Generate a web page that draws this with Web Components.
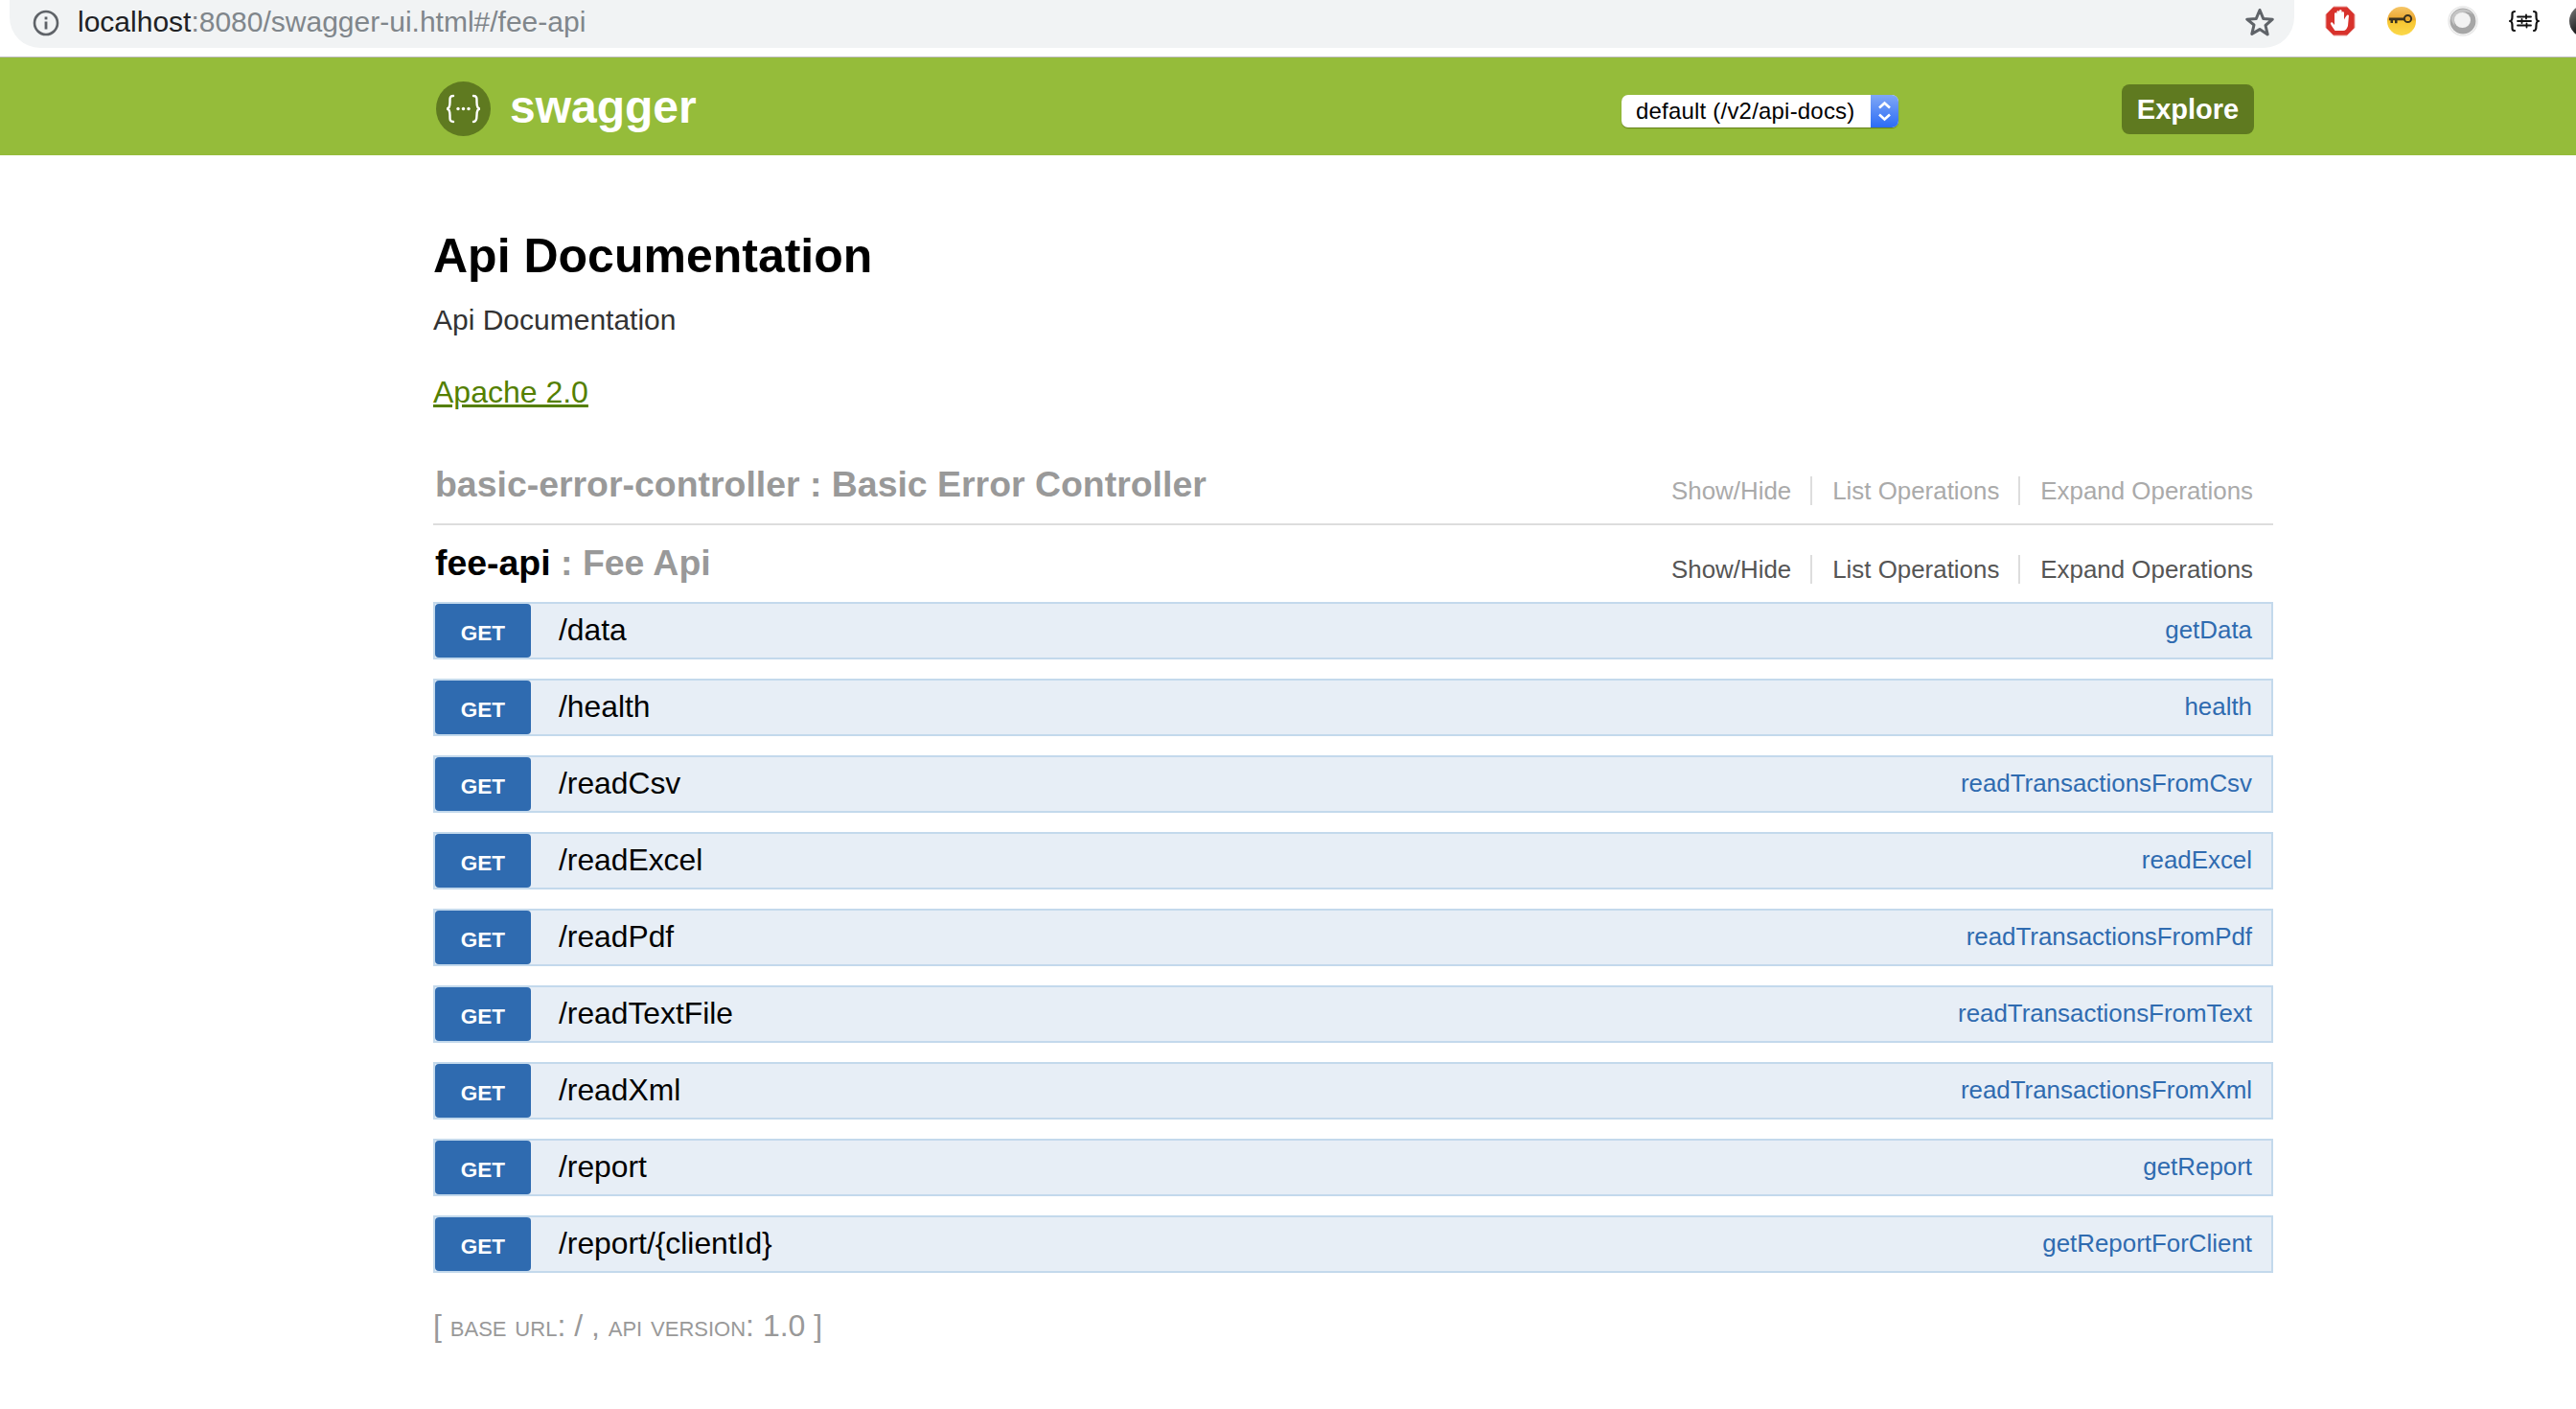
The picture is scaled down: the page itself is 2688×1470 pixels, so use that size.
<!DOCTYPE html>
<html lang="en"><head><meta charset="utf-8"><title>Swagger UI</title>
<style>
html,body{margin:0;padding:0;background:#fff;font-family:"Liberation Sans",Arial,sans-serif;overflow:hidden;height:1470px}
</style></head>
<body>
<browser-bar url-host="localhost" url-rest=":8080/swagger-ui.html#/fee-api"></browser-bar>
<swagger-header></swagger-header>
<api-page>
  <api-info title="Api Documentation" desc="Api Documentation" license="Apache 2.0"></api-info>
  <api-section name="basic-error-controller" desc="Basic Error Controller" muted divider></api-section>
  <api-section name="fee-api" desc="Fee Api">
    <op-row path="/data" nick="getData"></op-row>
    <op-row path="/health" nick="health"></op-row>
    <op-row path="/readCsv" nick="readTransactionsFromCsv"></op-row>
    <op-row path="/readExcel" nick="readExcel"></op-row>
    <op-row path="/readPdf" nick="readTransactionsFromPdf"></op-row>
    <op-row path="/readTextFile" nick="readTransactionsFromText"></op-row>
    <op-row path="/readXml" nick="readTransactionsFromXml"></op-row>
    <op-row path="/report" nick="getReport"></op-row>
    <op-row path="/report/{clientId}" nick="getReportForClient"></op-row>
  </api-section>
  <api-footer></api-footer>
</api-page>
<script>
function def(name, render){
  customElements.define(name, class extends HTMLElement{
    constructor(){super();this.attachShadow({mode:'open'});}
    connectedCallback(){this.shadowRoot.innerHTML=render(this);}
  });
}
def('browser-bar', el=>`<style>
:host{display:flex;height:59px;border-bottom:1px solid #b9b9b9;box-sizing:content-box;overflow:hidden;background:#fff;font-family:"Liberation Sans",Arial,sans-serif}
.url{flex:none;margin-left:10px;width:2384px;height:50px;background:#f1f3f4;border-radius:0 0 32px 32px;display:flex;align-items:center;box-sizing:border-box;padding:0 0 2px 24px}
.url .info{flex:none;width:28px;height:28px;margin-right:19px}
.txt{font-size:30px;line-height:44px;color:#80868b;white-space:nowrap;margin-top:-2px}
.txt b{font-weight:400;color:#202124}
.star{margin-left:auto;margin-right:20px;width:32px;height:32px;flex:none;margin-top:-2px}
.ext{display:flex;flex:none;height:44px;align-items:center;padding-left:30px;gap:28px}
.ext svg{flex:none;width:36px;height:36px}
</style>
<div class="url">
<svg class="info" viewBox="0 0 28 28"><circle cx="14" cy="14" r="12" fill="none" stroke="#5f6368" stroke-width="2.6"/><rect x="12.6" y="12.5" width="2.8" height="8" fill="#5f6368"/><rect x="12.6" y="7.5" width="2.8" height="2.9" fill="#5f6368"/></svg>
<span class="txt"><b>${el.getAttribute('url-host')}</b>${el.getAttribute('url-rest')}</span>
<svg class="star" viewBox="0 0 32 32"><path d="M16 3.5l3.7 8.9 9.6.8-7.3 6.3 2.2 9.4L16 23.6l-8.2 4.8L10 19 2.700 13.2l9.6-.8z" fill="none" stroke="#5f6368" stroke-width="3" stroke-linejoin="round"/></svg>
</div>
<div class="ext">
<svg viewBox="0 0 36 36"><path d="M11 3h14l8 8v14l-8 8H11l-8-8V11z" fill="#d8322c" stroke="#e9a09c" stroke-width="1"/><path d="M12.500 28c-1.500-2-3.500-5-4.500-7-.6-1.300 1-2.300 2-1.200l2 2.200V10.500c0-1.600 2.400-1.600 2.400 0V8.500c0-1.700 2.600-1.700 2.600 0v-1c0-1.700 2.600-1.700 2.600 0v2c0-1.600 2.400-1.500 2.400 0v7c.9-1.900 1.800-3.600 3.200-4.800 1-.8 2.200.1 1.700 1.300L26 23c-1 3-2.500 5-5 5z" fill="#fff"/></svg>
<svg viewBox="0 0 36 36"><defs><linearGradient id="k" x1="0" y1="0" x2="0" y2="1"><stop offset="0" stop-color="#f6c667"/><stop offset=".45" stop-color="#e9a52c"/><stop offset=".5" stop-color="#f7c531"/><stop offset="1" stop-color="#fbd94a"/></linearGradient></defs><circle cx="18" cy="18" r="15" fill="url(#k)"/><circle cx="24.500" cy="15.500" r="3.600" fill="none" stroke="#3a3320" stroke-width="2"/><path d="M21 14.500H5v2.800h1.500v2.700h2.500v-2.700h2v3h2.500v-3H21z" fill="#3a3320"/></svg>
<svg viewBox="0 0 36 36"><circle cx="18" cy="18" r="15" fill="#fff" stroke="#e8e8e8" stroke-width="1.500"/><circle cx="18" cy="18" r="13.500" fill="#a6a6a6"/><path d="M5.500 15a13 13 0 0 1 23-4a12 11 0 0 0-19 12a13 13 0 0 1-4-8z" fill="#c4c4c4"/><ellipse cx="17.500" cy="17" rx="8.500" ry="8" fill="#f2f2f2"/></svg>
<svg viewBox="0 0 36 36" fill="none" stroke="#111" stroke-width="2.200" stroke-linecap="round" stroke-linejoin="round"><path d="M8 8c-3 0-2.500 2-2.500 5 0 3-.5 5-2.500 5 2 0 2.500 2 2.500 5 0 3-.5 5 2.500 5M28 8c3 0 2.500 2 2.500 5 0 3 .5 5 2.500 5-2 0-2.500 2-2.500 5 0 3-.5 5-2.500 5"/><path d="M11 13.500h14M11 18h14M11 22.500h14" stroke-width="1.800"/><path d="M20 11.500v4M15.500 16v4M20.500 20.500v4" stroke-width="1.800"/></svg>
<svg viewBox="0 0 36 36"><defs><linearGradient id="g" x1="0" y1="0" x2="1" y2="1"><stop offset="0" stop-color="#888"/><stop offset=".5" stop-color="#222"/><stop offset="1" stop-color="#000"/></linearGradient></defs><circle cx="18" cy="18" r="17" fill="url(#g)"/></svg>
</div>`);
def('swagger-header', ()=>`<style>
:host{display:flex;height:102px;background:#95bc3a;align-items:flex-start;box-sizing:border-box;padding-left:455px;padding-right:336px;font-family:"Liberation Sans",Arial,sans-serif}
.logo{display:block;width:57px;height:57px;margin-top:25px;flex:none}
.brand{color:#fff;font-size:48px;font-weight:700;line-height:56px;margin:24px 0 0 20px}
.sel{margin-left:auto;margin-top:39px;width:289px;height:34px;background:#fff;border-radius:7px;display:flex;box-shadow:0 1px 1px rgba(60,80,0,.55);overflow:hidden;color:#000;font-size:24px;letter-spacing:.2px;line-height:33px}
.sel span{flex:1;padding-left:15px;white-space:nowrap}
.arr{flex:none;width:29px;height:34px;display:block;background:linear-gradient(#80a8f6,#2b6cf6)}
.btn{margin-left:233px;margin-top:28px;width:138px;height:52px;background:#5f7a20;border-radius:8px;color:#fff;font-size:29px;font-weight:700;line-height:53px;text-align:center}
</style>
<svg class="logo" viewBox="0 0 57 57"><circle cx="28.500" cy="28.500" r="28.500" fill="#5f7a20"/><path d="M18 15c-4 0-3.500 2.500-3.500 6.500 0 4-.5 7-3.500 7 3 0 3.500 3 3.500 7 0 4-.5 6.500 3.500 6.500M39 15c4 0 3.500 2.500 3.500 6.500 0 4 .5 7 3.500 7-3 0-3.500 3-3.500 7 0 4-.5 6.500-3.500 6.500" fill="none" stroke="#fff" stroke-width="2.400" stroke-linecap="round"/><circle cx="23" cy="28.500" r="1.700" fill="#fff"/><circle cx="28.500" cy="28.500" r="1.700" fill="#fff"/><circle cx="34" cy="28.500" r="1.700" fill="#fff"/></svg>
<div class="brand">swagger</div>
<div class="sel"><span>default (/v2/api-docs)</span><svg class="arr" viewBox="0 0 29 34"><path d="M9 13.500l5.500-5 5.500 5M9 20.500l5.500 5 5.500-5" fill="none" stroke="#fff" stroke-width="2.600"/></svg></div>
<div class="btn">Explore</div>`);
def('api-page', ()=>`<style>:host{display:block;margin:0 316px 0 452px;width:1920px;font-family:"Liberation Sans",Arial,sans-serif}</style><slot></slot>`);
def('api-info', el=>`<style>
:host{display:block;padding-top:75px;margin-bottom:37px}
h1{margin:0;font-size:50px;line-height:60px;font-weight:700;color:#000}
p{margin:17px 0 0;font-size:30px;line-height:40px;color:#333}
a{display:block;margin-top:35px;font-size:32px;line-height:40px;color:#547f00;text-decoration:underline}
</style><h1>${el.getAttribute('title')}</h1><p>${el.getAttribute('desc')}</p><a>${el.getAttribute('license')}</a>`);
def('api-section', el=>{
  const muted=el.hasAttribute('muted');
  return `<style>
:host{display:block}
.head{display:flex;justify-content:space-between;align-items:flex-start;height:80px;box-sizing:content-box;${el.hasAttribute('divider')?'border-bottom:2px solid #ddd;':''}}
h2{margin:19px 0 0 2px;font-size:37.44px;line-height:40px;font-weight:700;color:#999;white-space:nowrap}
h2 b{color:${muted?'#999':'#000'}}
ul{list-style:none;display:flex;margin:31px 21px 0 0;padding:0;font-size:25.9px;line-height:30px;color:${muted?'#aaa':'#555'}}
li{padding:0 20px 0 21px;border-right:2px solid #ddd}
li:last-child{border:0;padding-right:0}
li:first-child{padding-left:0}
.ops{display:flex;flex-direction:column;gap:20px}
</style><div class="head"><h2><b>${el.getAttribute('name')}</b> : ${el.getAttribute('desc')}</h2><ul><li>Show/Hide</li><li>List Operations</li><li>Expand Operations</li></ul></div><div class="ops"><slot></slot></div>`;
});
def('op-row', el=>`<style>
:host{display:flex;height:60px;box-sizing:border-box;border:2px solid #c3d9ec;background:#e7eef6;align-items:stretch}
.m{flex:none;width:100px;background:#2f6bb0;border-radius:4px;color:#fff;font-size:22.500px;font-weight:700;text-align:center;line-height:61px}
.p{flex:1;padding-left:29px;font-size:31.8px;line-height:55px;color:#000;white-space:nowrap}
.n{flex:none;padding-right:20px;font-size:25.9px;line-height:54px;color:#2f6bb0;white-space:nowrap}
</style><div class="m">GET</div><div class="p">${el.getAttribute('path')}</div><div class="n">${el.getAttribute('nick')}</div>`);
def('api-footer', ()=>`<style>
:host{display:block;margin-top:35px;font-size:32px;line-height:40px;color:#999;font-variant:small-caps;white-space:nowrap}
</style>[ base url: / , api version: 1.0 ]`);
</script>
</body></html>
